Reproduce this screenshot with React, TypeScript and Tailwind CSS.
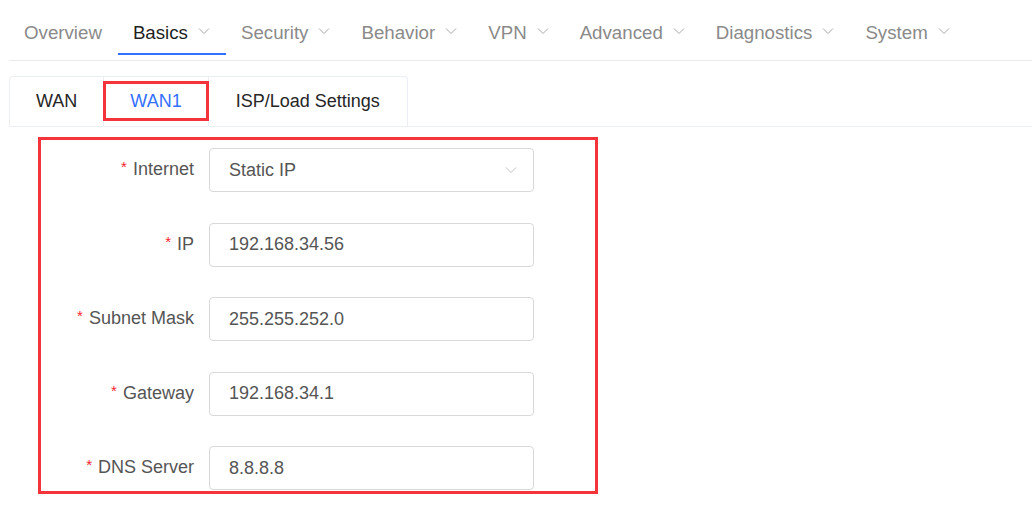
import React from 'react';

const navItems = [
  { label: 'Overview', menu: false, active: false },
  { label: 'Basics', menu: true, active: true },
  { label: 'Security', menu: true, active: false },
  { label: 'Behavior', menu: true, active: false },
  { label: 'VPN', menu: true, active: false },
  { label: 'Advanced', menu: true, active: false },
  { label: 'Diagnostics', menu: true, active: false },
  { label: 'System', menu: true, active: false },
];

const fields = [
  { label: 'Internet', value: 'Static IP', select: true },
  { label: 'IP', value: '192.168.34.56' },
  { label: 'Subnet Mask', value: '255.255.252.0' },
  { label: 'Gateway', value: '192.168.34.1' },
  { label: 'DNS Server', value: '8.8.8.8' },
];

const Chevron = ({ className }: { className?: string }) => (
  <svg width="12" height="8" viewBox="0 0 12 8" fill="none" className={className}>
    <path d="M1 1.5 L6 6.5 L11 1.5" stroke="currentColor" strokeWidth="1" />
  </svg>
);

const App = () => {
  return (
    <div className="w-[1032px] h-[508px] bg-white overflow-hidden font-['Liberation_Sans',Arial,sans-serif] text-[18px]">
      {/* top menu */}
      <div className="ml-[9px] flex border-b border-[#e8eaf0] pb-[5px] text-[18.7px]">
        {navItems.map((item) => (
          <div
            key={item.label}
            className={`h-[55px] pt-[13px] pl-[15px] pr-[16px] flex items-center gap-[10px] border-b-2 ${
              item.active ? 'border-[#3370ff] text-[#1f1f1f]' : 'border-transparent text-[#8a8a8a]'
            }`}
          >
            <span>{item.label}</span>
            {item.menu && <Chevron className="text-[#a8a8a8] mt-[-4px]" />}
          </div>
        ))}
      </div>

      {/* sub tabs */}
      <div className="ml-[9px] mt-[15px] flex border-b border-[#ebeef5]">
        <div className="flex h-[50px] border border-b-0 border-[#ebeef5] rounded-t-[4px]">
          <div className="px-[26px] flex items-center text-[#262626]">WAN</div>
          <div className="relative px-[26px] flex items-center text-[#3370ff] border-l border-[#ebeef5]">
            WAN1
            <div className="absolute left-[-1px] top-[4px] w-[106px] h-[40px] border-[3px] border-[#f5333a]" />
          </div>
          <div className="px-[27px] flex items-center text-[#262626] border-l border-[#ebeef5]">ISP/Load Settings</div>
        </div>
      </div>

      {/* form */}
      <div className="ml-[38px] mt-[10px] w-[560px] h-[357px] border-[3px] border-[#f5333a] pt-[8px]">
        <div className="flex flex-col gap-[30.5px]">
          {fields.map((f) => (
            <div key={f.label} className="flex items-start">
              <div className="w-[153px] h-[42px] leading-[42px] text-right text-[#555555] whitespace-nowrap">
                <span className="text-[#f5222d] text-[15px] align-top leading-[38px] mr-[6px]">*</span>
                {f.label}
              </div>
              <div className="ml-[15px] w-[325px] h-[44px] border border-[#d9d9d9] rounded-[4px] flex items-center pl-[19px] pr-[16px] text-[#555555]">
                <span className="flex-1">{f.value}</span>
                {f.select && <Chevron className="text-[#c0c0c0]" />}
              </div>
            </div>
          ))}
        </div>
      </div>
    </div>
  );
};

export default App;
